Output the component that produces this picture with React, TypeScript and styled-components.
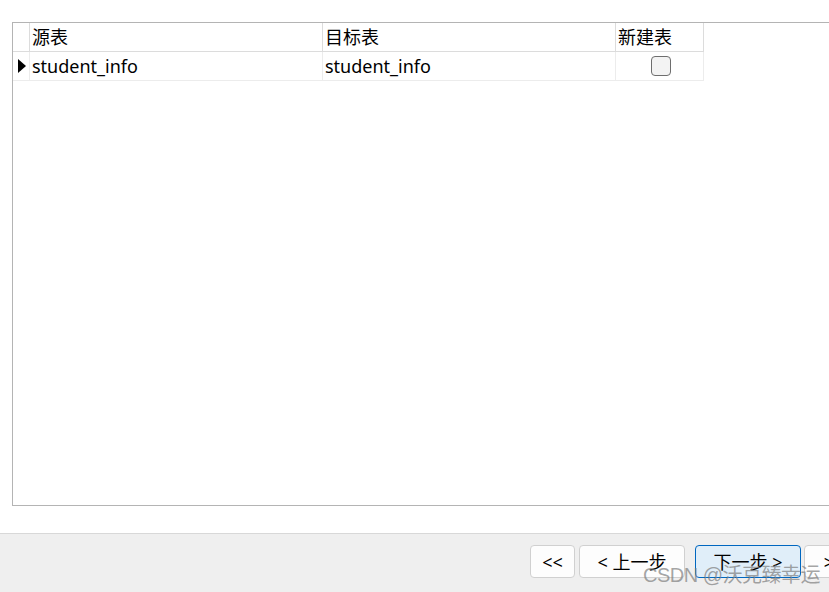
import styled, { createGlobalStyle } from "styled-components";

const Global = createGlobalStyle`
  html, body {
    margin: 0;
    padding: 0;
    background: #ffffff;
    overflow: hidden;
  }
  body {
    font-family: "Noto Sans", "Noto Sans CJK SC", sans-serif;
    color: #000;
  }
`;

const Page = styled.div`
  width: 829px;
  height: 592px;
  display: flex;
  flex-direction: column;
  position: relative;
  overflow: hidden;
`;

const Content = styled.div`
  flex: 1;
  padding: 22px 0 27px 12px;
  display: flex;
`;

const GridBox = styled.div`
  flex: 1;
  margin-right: -20px;
  border: 1px solid #b4b4b4;
  background: #fff;
`;

const Row = styled.div`
  display: grid;
  grid-template-columns: 17px 293px 293px 88px;
  height: 29px;
  width: max-content;
`;

const Cell = styled.div<{ $line: string; $center?: boolean }>`
  box-sizing: border-box;
  border-right: 1px solid ${(p) => p.$line};
  border-bottom: 1px solid ${(p) => p.$line};
  display: flex;
  align-items: center;
  justify-content: ${(p) => (p.$center ? "center" : "flex-start")};
  padding-left: ${(p) => (p.$center ? "0" : "2px")};
  font-size: 18px;
  line-height: 1;
  white-space: nowrap;
  overflow: hidden;
`;

const Marker = styled.div`
  width: 0;
  height: 0;
  border-top: 7.5px solid transparent;
  border-bottom: 7.5px solid transparent;
  border-left: 8px solid #000;
  margin-left: 3px;
`;

const Check = styled.div`
  box-sizing: border-box;
  width: 20px;
  height: 20px;
  border: 1px solid #6e6e6e;
  border-radius: 4px;
  background: #f3f3f3;
  margin-left: 2px;
`;

const Footer = styled.div`
  height: 59px;
  border-top: 1px solid #d8d8d8;
  background: #efefef;
  display: flex;
  align-items: flex-start;
  padding: 11px 0 0 530px;
  box-sizing: border-box;
  white-space: nowrap;
`;

const Btn = styled.button<{ $w: number; $primary?: boolean; $gap: number }>`
  flex: none;
  box-sizing: border-box;
  width: ${(p) => p.$w}px;
  height: 33px;
  margin-left: ${(p) => p.$gap}px;
  border: 1px solid ${(p) => (p.$primary ? "#0067c0" : "#d0d0d0")};
  border-radius: 4px;
  background: ${(p) => (p.$primary ? "#e0eef9" : "#fdfdfd")};
  font-family: "Noto Sans", "Noto Sans CJK SC", sans-serif;
  font-size: 18px;
  line-height: 1;
  color: #000;
  padding: 0;
`;

const Watermark = styled.div`
  position: absolute;
  left: 643px;
  top: 559px;
  font-family: "Liberation Sans", "Noto Sans CJK SC", sans-serif;
  font-size: 20px;
  color: rgba(125, 125, 125, 0.7);
  letter-spacing: -0.5px;
  pointer-events: none;
`;

export default function App() {
  const head = "#dcdcdc";
  const body = "#ececec";
  return (
    <Page>
      <Global />
      <Content>
        <GridBox>
          <Row>
            <Cell $line={head} />
            <Cell $line={head}>源表</Cell>
            <Cell $line={head}>目标表</Cell>
            <Cell $line={head}>新建表</Cell>
          </Row>
          <Row>
            <Cell $line={body}>
              <Marker />
            </Cell>
            <Cell $line={body}>student_info</Cell>
            <Cell $line={body}>student_info</Cell>
            <Cell $line={body} $center>
              <Check />
            </Cell>
          </Row>
        </GridBox>
      </Content>
      <Footer>
        <Btn $w={45} $gap={0}>&lt;&lt;</Btn>
        <Btn $w={106} $gap={4}>&lt; 上一步</Btn>
        <Btn $w={106} $gap={10} $primary>下一步 &gt;</Btn>
        <Btn $w={60} $gap={3}>&gt;&gt;</Btn>
      </Footer>
      <Watermark>CSDN @沃克臻幸运</Watermark>
    </Page>
  );
}
